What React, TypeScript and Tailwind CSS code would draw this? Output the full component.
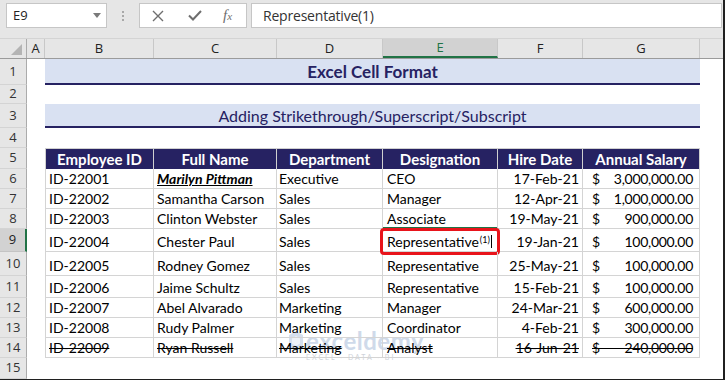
import React from "react";

const rows: string[][] = [
  ["ID-22001", "Marilyn Pittman", "Executive", "CEO", "17-Feb-21", "3,000,000.00"],
  ["ID-22002", "Samantha Carson", "Sales", "Manager", "12-Apr-21", "1,000,000.00"],
  ["ID-22003", "Clinton Webster", "Sales", "Associate", "19-May-21", "900,000.00"],
  ["ID-22004", "Chester Paul", "Sales", "Representative", "19-Jan-21", "100,000.00"],
  ["ID-22005", "Rodney Gomez", "Sales", "Representative", "25-May-21", "100,000.00"],
  ["ID-22006", "Jaime Schultz", "Sales", "Representative", "15-Feb-21", "100,000.00"],
  ["ID-22007", "Abel Alvarado", "Marketing", "Manager", "24-Mar-21", "600,000.00"],
  ["ID-22008", "Rudy Palmer", "Marketing", "Coordinator", "4-Feb-21", "300,000.00"],
  ["ID-22009", "Ryan Russell", "Marketing", "Analyst", "16-Jun-21", "240,000.00"],
];

const hCls = ["h-[20px]", "h-[20px]", "h-[20px]", "h-[23px]", "h-[24px]", "h-[22px]", "h-[20px]", "h-[20px]", "h-[20px]"];

const rowHdr =
  "w-[27px] shrink-0 flex items-center justify-center bg-[#e6e6e6] border-r border-r-[#ababab] border-b border-b-[#d4d4d4] text-[13px] text-[#333] font-['Open_Sans',sans-serif]";
const rowHdrSel =
  "w-[27px] shrink-0 flex items-center justify-center bg-[#d2d2d2] border-r-2 border-r-[#217346] border-b border-b-[#c4c4c4] text-[13px] text-[#222] font-['Open_Sans',sans-serif]";
const cell =
  "flex items-end pb-[1px] leading-[16px] text-[14px] text-black border-r border-b border-[#d4d4d4] whitespace-nowrap";

function RowHeader({ n, sel }: { n: number; sel?: boolean }) {
  return <div className={sel ? rowHdrSel : rowHdr}>{n}</div>;
}

export default function App() {
  return (
    <div className="relative isolate w-[725px] h-[380px] overflow-hidden bg-white border-r-2 border-b border-[#202020] flex flex-col font-['Lato',sans-serif]">
      {/* Formula bar */}
      <div className="h-[38px] shrink-0 bg-[#e6e6e6] flex items-start pt-[3px] pl-[6px] pr-[1px]">
        <div className="w-[101px] h-[25px] shrink-0 bg-white border border-[#c6c6c6] flex items-center justify-between pl-[6px] pr-[5px]">
          <span className="text-[13px] text-[#222] font-['Open_Sans',sans-serif]">E9</span>
          <svg width="8" height="5" viewBox="0 0 8 5">
            <polygon points="0,0 8,0 4,5" fill="#7a7a7a" />
          </svg>
        </div>
        <div className="w-[32px] h-[25px] shrink-0 flex flex-col items-center justify-center gap-[2px]">
          <span className="w-[2px] h-[2px] bg-[#a8a8a8]" />
          <span className="w-[2px] h-[2px] bg-[#a8a8a8]" />
          <span className="w-[2px] h-[2px] bg-[#a8a8a8]" />
        </div>
        <div className="w-[108px] h-[25px] shrink-0 bg-white border border-[#c6c6c6] flex items-center">
          <svg width="12" height="12" viewBox="0 0 12 12" className="ml-[12px]">
            <path d="M1 1 L11 11 M11 1 L1 11" stroke="#6e6e6e" strokeWidth="1.4" fill="none" />
          </svg>
          <svg width="14" height="11" viewBox="0 0 14 11" className="ml-[24px]">
            <path d="M1 5.5 L5 9.5 L13 1" stroke="#6e6e6e" strokeWidth="2" fill="none" />
          </svg>
          <span className="ml-[21px] text-[15px] italic text-[#6e6e6e] font-['Liberation_Serif',serif] leading-none">
            f<span className="text-[11px]">x</span>
          </span>
        </div>
        <div className="flex-1 h-[25px] ml-[4px] bg-white border border-[#c6c6c6] flex items-center pl-[11px]">
          <span className="text-[14px] text-[#333] font-['Open_Sans',sans-serif] tracking-[-0.2px]">Representative(1)</span>
        </div>
      </div>

      {/* Column headers */}
      <div className="h-[21px] shrink-0 flex bg-[#e6e6e6] border-t border-t-[#d4d4d4] border-b border-b-[#9b9b9b] text-[13px] text-[#222] font-['Open_Sans',sans-serif]">
        <div className="w-[27px] shrink-0 flex items-end justify-end pr-[4px] pb-[3px] border-r border-[#ababab]">
          <svg width="11" height="11" viewBox="0 0 11 11">
            <polygon points="11,0 11,11 0,11" fill="#b4b4b4" />
          </svg>
        </div>
        <div className="w-[18px] shrink-0 flex items-center justify-center border-r border-[#c8c8c8]">A</div>
        <div className="w-[109px] shrink-0 flex items-center justify-center border-r border-[#c8c8c8]">B</div>
        <div className="w-[123px] shrink-0 flex items-center justify-center border-r border-[#c8c8c8]">C</div>
        <div className="w-[106px] shrink-0 flex items-center justify-center border-r border-[#c8c8c8]">D</div>
        <div className="w-[115px] shrink-0 flex items-center justify-center bg-[#d2d2d2] border-b-2 border-b-[#217346] border-r border-r-[#c8c8c8] text-[#217346]">E</div>
        <div className="w-[85px] shrink-0 flex items-center justify-center border-r border-[#c8c8c8]">F</div>
        <div className="w-[117px] shrink-0 flex items-center justify-center border-r border-[#c8c8c8]">G</div>
        <div className="flex-1" />
      </div>

      {/* Row 1 */}
      <div className="h-[26px] shrink-0 flex">
        <RowHeader n={1} />
        <div className="w-[18px] shrink-0" />
        <div className="w-[655px] shrink-0 bg-[#d9e1f2] border-b-2 border-[#262262] flex items-end justify-center pb-[2px] leading-[19px] text-[17px] font-bold text-[#262262]">
          Excel Cell Format
        </div>
        <div className="flex-1" />
      </div>
      {/* Row 2 */}
      <div className="h-[19px] shrink-0 flex">
        <RowHeader n={2} />
        <div className="flex-1" />
      </div>
      {/* Row 3 */}
      <div className="h-[24px] shrink-0 flex">
        <RowHeader n={3} />
        <div className="w-[18px] shrink-0" />
        <div className="w-[655px] shrink-0 bg-[#d9e1f2] border-b-2 border-[#262262] flex items-end justify-center pb-[1px] leading-[18px] text-[16px] text-[#262262]">
          Adding Strikethrough/Superscript/Subscript
        </div>
        <div className="flex-1" />
      </div>
      {/* Row 4 */}
      <div className="h-[20px] shrink-0 flex">
        <RowHeader n={4} />
        <div className="flex-1" />
      </div>
      {/* Row 5 header */}
      <div className="h-[21px] shrink-0 flex">
        <RowHeader n={5} />
        <div className="w-[18px] shrink-0" />
        {[
          ["w-[109px] border-l", "Employee ID"],
          ["w-[123px]", "Full Name"],
          ["w-[106px]", "Department"],
          ["w-[115px]", "Designation"],
          ["w-[85px]", "Hire Date"],
          ["w-[117px]", "Annual Salary"],
        ].map(([w, t]) => (
          <div
            key={t}
            className={`${w} shrink-0 bg-[#262262] border-t border-r border-[#d0d0d0] flex items-end justify-center pb-[1px] leading-[17px] text-[15px] font-bold text-white`}
          >
            {t}
          </div>
        ))}
        <div className="flex-1" />
      </div>

      {/* Data rows */}
      {rows.map((r, i) => {
        const strike = i === 8;
        const st = strike ? "line-through" : "";
        return (
          <div key={i} className={`${hCls[i]} shrink-0 flex`}>
            <RowHeader n={i + 6} sel={i === 3} />
            <div className="w-[18px] shrink-0" />
            <div className={`${cell} w-[109px] shrink-0 border-l pl-[3px]`}>
              <span className={st}>{r[0]}</span>
            </div>
            <div className={`${cell} w-[123px] shrink-0 pl-[3px]`}>
              {i === 0 ? (
                <span className="font-bold italic underline">{r[1]}</span>
              ) : (
                <span className={st}>{r[1]}</span>
              )}
            </div>
            <div className={`${cell} w-[106px] shrink-0 pl-[2px]`}>
              <span className={st}>{r[2]}</span>
            </div>
            <div className={`${cell} w-[115px] shrink-0 pl-[4px] relative`}>
              {i === 3 ? (
                <>
                  <span>{r[3]}</span>
                  <span className="relative -top-[6px] text-[9px] leading-[9px] ml-[1px]">(1)</span>
                  <span className="inline-block w-px h-[13px] bg-black ml-[1px] mb-[2px]" />
                  <div className="absolute left-0 right-0 -top-[2px] h-[2px] bg-[#217346]" />
                  <div className="absolute -left-[3px] -right-[3px] -top-[1px] -bottom-[4px] border-[3px] border-[#e8141b] rounded-[4px]" />
                </>
              ) : (
                <span className={st}>{r[3]}</span>
              )}
            </div>
            <div className={`${cell} w-[85px] shrink-0 justify-end pr-[3px]`}>
              <span className={st}>{r[4]}</span>
            </div>
            <div className={`${cell} w-[117px] shrink-0 justify-between pl-[9px] pr-[6px] relative`}>
              <span>$</span>
              <span className="tracking-[-0.3px]">{r[5]}</span>
              {strike && <div className="absolute left-[9px] right-[6px] top-[10px] h-px bg-black" />}
            </div>
            <div className="flex-1" />
          </div>
        );
      })}

      {/* Row 15 */}
      <div className="flex-1 flex">
        <RowHeader n={15} />
        <div className="flex-1" />
      </div>

      {/* Watermark */}
      <div className="absolute -z-10 left-[288px] top-[329px] flex flex-col pointer-events-none">
        <div className="flex items-center gap-[2px]">
          <svg width="16" height="22" viewBox="0 0 16 22">
            <polygon points="8,1 15,5 15,17 8,21 1,17 1,5" fill="#d5dfee" />
            <polygon points="8,6 12,8.5 12,13.5 8,16 4,13.5 4,8.5" fill="#eef2f8" />
          </svg>
          <span className="text-[24px] font-bold leading-[24px] text-[#cfdaea] tracking-[0.5px]">exceldemy</span>
        </div>
        <span className="text-[7px] leading-[8px] tracking-[2px] text-[#cfd3da] ml-[18px]">EXCEL · DATA · BI</span>
      </div>
    </div>
  );
}
